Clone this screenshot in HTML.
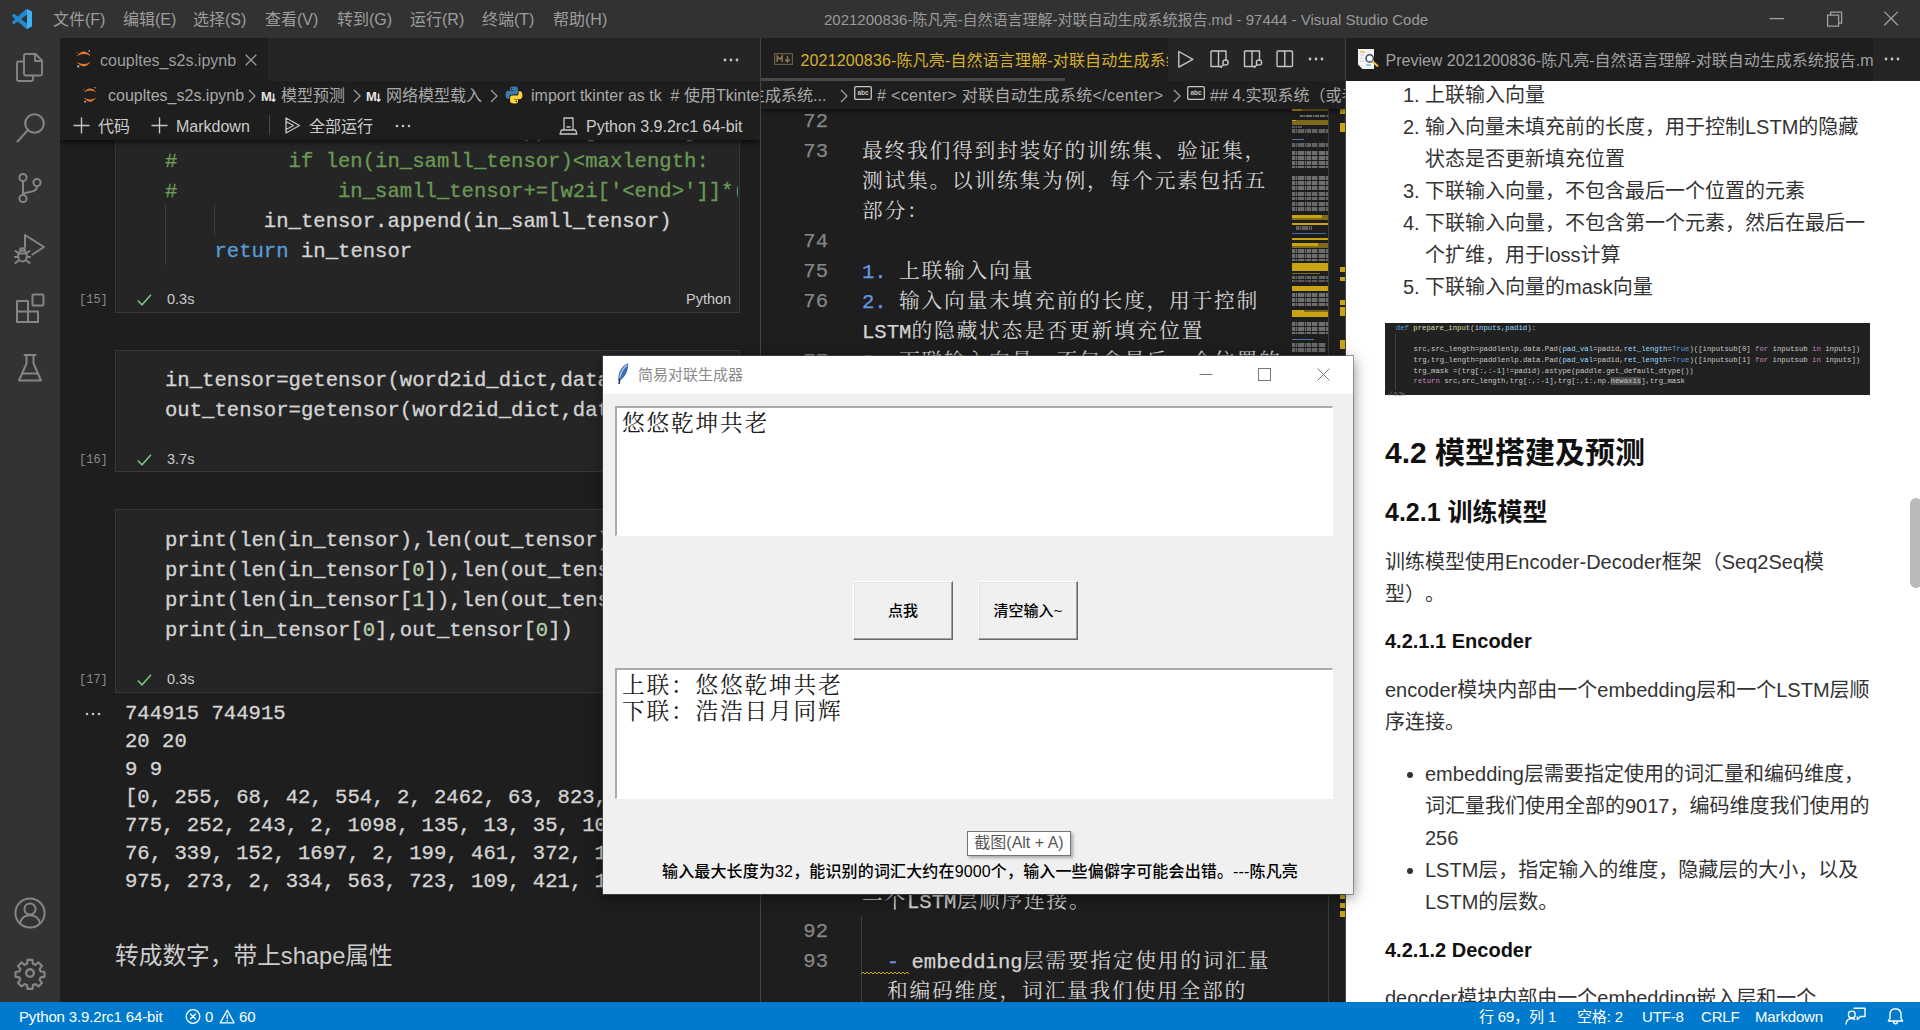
<!DOCTYPE html>
<html lang="zh-CN">
<head>
<meta charset="utf-8">
<title>2021200836-陈凡亮-自然语言理解-对联自动生成系统报告.md - 97444 - Visual Studio Code</title>
<style>
*{box-sizing:border-box;margin:0;padding:0}
html,body{width:1920px;height:1030px;overflow:hidden;background:#1e1e1e}
body{position:relative;text-spacing-trim:space-all;font-family:"Liberation Sans","Noto Sans CJK SC",sans-serif;color:#ccc;font-size:16px}
.abs{position:absolute}
.ui{font-family:"Liberation Sans","Noto Sans CJK SC",sans-serif}
.mono{font-family:"Liberation Mono","Noto Sans CJK SC",monospace}
.kai{font-family:"Liberation Mono","Noto Serif CJK SC",monospace}
.nw{white-space:nowrap}
svg{display:block;overflow:visible}

/* ---------- title bar ---------- */
#titlebar{left:0;top:0;width:1920px;height:38px;background:#323233}
#titlebar .menu{position:absolute;top:0;height:38px;line-height:40px;font-size:16px;color:#9d9d9d;white-space:nowrap}
#titlebar .title{position:absolute;top:0;left:824px;width:602px;text-align:center;height:38px;line-height:39px;font-size:15px;color:#9a9a9a;white-space:nowrap}

/* ---------- activity bar ---------- */
#activity{left:0;top:38px;width:60px;height:964px;background:#333333}
#activity svg{position:absolute;left:14px}

/* ---------- status bar ---------- */
#status{left:0;top:1002px;width:1920px;height:28px;background:#007acc;color:#fff;font-size:15px;letter-spacing:-.15px;line-height:29px;white-space:nowrap}
#status span{position:absolute;top:0}

/* ---------- editor groups ---------- */
.tabbar{background:#252526;height:44px}
.tab{background:#1e1e1e;height:44px;line-height:43px;font-size:16px;white-space:nowrap;overflow:hidden}
.crumbs{background:#1e1e1e;height:27px;line-height:27px;font-size:16px;color:#a9a9a9;white-space:nowrap;overflow:hidden}

/* left notebook */
#g1{left:60px;top:38px;width:700px;height:964px;background:#1e1e1e;overflow:hidden}
.cell{position:absolute;left:55px;width:625px;background:#252526;border:1px solid #383838}
.code{position:absolute;white-space:pre;margin-top:2px;max-width:573px;overflow:hidden;-webkit-text-stroke:.3px;font-size:20.6px;line-height:30px;color:#d4d4d4}
.out{position:absolute;white-space:pre;margin-top:2px;-webkit-text-stroke:.3px;font-size:20.6px;line-height:28px;color:#d4d4d4}
.exec{position:absolute;margin-top:3px;font-size:12px;color:#8b8b8b;left:19px}
.stat{position:absolute;margin-top:2px;font-size:14.5px;color:#ccc}
.cm{color:#6a9955}.kw{color:#569cd6}.nu{color:#b5cea8}

/* middle editor */
#g2{left:761px;top:38px;width:584px;height:964px;background:#1e1e1e;overflow:hidden}
.ln{position:absolute;margin-top:2px;-webkit-text-stroke:.25px;left:0;width:67px;text-align:right;font-size:20.600px;line-height:30px;color:#858585}
.md{position:absolute;margin-top:2.500px;left:101px;letter-spacing:1.700px;font-size:20.800px;line-height:30px;color:#d4d4d4;white-space:nowrap}
.md .la{font-size:20.600px;letter-spacing:0;-webkit-text-stroke:.25px}
.bl{color:#6796e6}

/* right preview */
#g3{left:1346px;top:38px;width:574px;height:964px;background:#fff;overflow:hidden}
#pv{position:absolute;left:0;width:574px;background:#fff;color:#333;font-size:20px;line-height:32px;overflow:hidden}
#pv .p{position:absolute;left:39px;white-space:nowrap}
#pv .li{position:absolute;left:79px;white-space:nowrap}
#pv .num{position:absolute;left:57px;white-space:nowrap}
#pv .h{position:absolute;left:39px;white-space:nowrap;font-weight:bold;color:#111}

/* tk window */
#tk{left:603px;top:356px;width:750px;height:538px;background:#f0f0f0;outline:1px solid rgba(90,90,90,.55);box-shadow:0 3px 14px rgba(0,0,0,.5)}
#tk .tbar{position:absolute;left:0;top:0;width:750px;height:38px;background:#fff}
#tk .ttl{position:absolute;left:35px;top:0;line-height:38px;font-size:15px;color:#8a8a8a;white-space:nowrap}
.tbox{position:absolute;background:#fff;border-top:2px solid #ababab;border-left:2px solid #ababab;border-right:1px solid #fff;border-bottom:1px solid #fff;font-family:"Noto Serif CJK SC","Liberation Serif",serif;color:#1a1a1a;font-size:22.700px;letter-spacing:1.800px;line-height:25.800px;white-space:pre}
.btn{position:absolute;background:#f0f0f0;border:1px solid;border-color:#fff #696969 #696969 #fff;box-shadow:inset -1px -1px 0 #a0a0a0, inset 1px 1px 0 #e3e3e3;text-align:center;color:#000;font-size:15px;font-weight:500}
</style>
</head>
<body>

<!-- TITLE BAR -->
<div id="titlebar" class="abs">
<svg class="abs" style="left:12px;top:9px" width="20" height="20" viewBox="0 0 24 24"><path fill="#2489ca" d="M23.15 2.587L18.21.21a1.494 1.494 0 0 0-1.705.29l-9.46 8.63-4.12-3.128a.999.999 0 0 0-1.276.057L.327 7.261A1 1 0 0 0 .326 8.74L3.899 12 .326 15.26a1 1 0 0 0 .001 1.479L1.65 17.94a.999.999 0 0 0 1.276.057l4.12-3.128 9.46 8.63a1.492 1.492 0 0 0 1.704.29l4.942-2.377A1.5 1.5 0 0 0 24 20.06V3.939a1.5 1.5 0 0 0-.85-1.352zm-5.146 14.861L10.826 12l7.178-5.448v10.896z"/><path fill="#3db1f5" d="M18 .1l5.15 2.49A1.5 1.5 0 0 1 24 3.94v16.12a1.5 1.5 0 0 1-.85 1.35L18 23.9z"/></svg>
<span class="menu" style="left:53px">文件(F)</span>
<span class="menu" style="left:123px">编辑(E)</span>
<span class="menu" style="left:193px">选择(S)</span>
<span class="menu" style="left:265px">查看(V)</span>
<span class="menu" style="left:337px">转到(G)</span>
<span class="menu" style="left:410px">运行(R)</span>
<span class="menu" style="left:482px">终端(T)</span>
<span class="menu" style="left:553px">帮助(H)</span>
<span class="title">2021200836-陈凡亮-自然语言理解-对联自动生成系统报告.md - 97444 - Visual Studio Code</span>
<svg class="abs" style="left:1762px;top:4px" width="150" height="30" viewBox="0 0 150 30" fill="none" stroke="#a0a0a0" stroke-width="1.3"><path d="M7.5 14.6h14.5"/><path d="M65.6 11.2h11v11h-11z M68.6 11.2v-3h11v11h-3"/><path d="M122.3 7.6l13.6 13.6M135.9 7.6l-13.6 13.6"/></svg>
</div>

<!-- ACTIVITY BAR -->
<div id="activity" class="abs">
<svg style="top:13px;left:14px" width="32" height="32" viewBox="0 0 32 32" fill="none" stroke="#858585" stroke-width="1.9" stroke-linejoin="round" stroke-linecap="round"><path d="M10 10.5H4.5a1.5 1.5 0 0 0-1.500 1.500v16.500a1.500 1.500 0 0 0 1.500 1.500H17.500a1.500 1.500 0 0 0 1.500-1.500V25"/><path d="M11.500 3h10l6.500 6.500V23a1.500 1.500 0 0 1-1.500 1.500h-15A1.500 1.500 0 0 1 10 23V4.500A1.500 1.500 0 0 1 11.500 3z"/><path d="M21 3.500v6.500h6.500"/></svg>
<svg style="top:74px;left:15px" width="32" height="32" viewBox="0 0 32 32" fill="none" stroke="#858585" stroke-width="2.1" stroke-linecap="round"><circle cx="19.5" cy="11.500" r="9.300"/><path d="M12.600 18.400L2.500 29.500"/></svg>
<svg style="top:134px;left:15px" width="32" height="32" viewBox="0 0 32 32" fill="none" stroke="#858585" stroke-width="2"><circle cx="8" cy="5.500" r="3.600"/><circle cx="8" cy="26.500" r="3.600"/><circle cx="22" cy="10.500" r="3.600"/><path d="M8 9.100v13.800M22 14.100c0 6-6 5.500-10.500 6.500-2.500.600-3.500 1.500-3.500 3"/></svg>
<svg style="top:194px;left:14px" width="32" height="32" viewBox="0 0 32 32" fill="none" stroke="#858585" stroke-width="2" stroke-linejoin="round" stroke-linecap="round"><path d="M11 15V3l19 12-11.500 7.500"/><ellipse cx="8.500" cy="24" rx="4.300" ry="5.500"/><path d="M4.500 21.500h8M1.500 19l2.700 2M15.500 19l-2.700 2M1 25h3.200M16 25h-3.200M1.500 31l3-2.500M15.500 31l-3-2.500M6 18.500c0-3 5-3 5 0"/></svg>
<svg style="top:254px;left:14px" width="32" height="32" viewBox="0 0 32 32" fill="none" stroke="#858585" stroke-width="2" stroke-linejoin="round"><path d="M3 9h11v21H3zM3 19.500h21V30H14"/><path d="M14 19.500v10.500M24 19.500V30H14"/><rect x="18.500" y="2.500" width="11" height="11" rx="1"/></svg>
<svg style="top:314px;left:15px" width="32" height="32" viewBox="0 0 32 32" fill="none" stroke="#858585" stroke-width="2" stroke-linejoin="round" stroke-linecap="round"><path d="M9.500 3h11M11.500 3v8.500L4 28.500h22l-7.500-17V3"/><path d="M7.500 21.500h15"/></svg>
<svg style="top:859px;left:14px" width="32" height="32" viewBox="0 0 32 32" fill="none" stroke="#858585" stroke-width="2"><circle cx="16" cy="16" r="14.600"/><circle cx="16" cy="12" r="5.600"/><path d="M5.800 26.300c1.500-5.500 5.500-8 10.200-8s8.700 2.500 10.200 8"/></svg>
<svg style="top:919px;left:14px" width="32" height="32" viewBox="0 0 32 32" fill="none" stroke="#858585" stroke-width="2.4" stroke-linejoin="round"><circle cx="16" cy="16" r="3.800"/><path d="M13.300 1.500h5.400l.6 4.300 2.700 1.100 3.500-2.600 3.800 3.800-2.600 3.500 1.100 2.700 4.300.6v5.400l-4.300.6-1.100 2.700 2.600 3.500-3.800 3.800-3.500-2.600-2.700 1.100-.6 4.300h-5.400l-.6-4.300-2.700-1.100-3.500 2.600-3.800-3.800 2.600-3.500-1.100-2.700-4.300-.6v-5.400l4.300-.6 1.100-2.700-2.600-3.500 3.800-3.800 3.500 2.600 2.700-1.100z" transform="translate(1.600 1.600) scale(.9)"/></svg>
</div>

<!-- GROUP 1: notebook -->
<div id="g1" class="abs">
<!-- notebook body -->
<div class="abs" style="left:0;top:102px;width:700px;height:862px;background:#1e1e1e"></div>
<!-- cell 15 -->
<div class="cell" style="top:60px;height:215px"></div>
<div class="abs" style="left:105px;top:167px;width:1px;height:60px;background:#404040"></div>
<div class="abs" style="left:154px;top:167px;width:1px;height:30px;background:#404040"></div>
<div class="code mono" style="left:105px;top:77px"><span class="cm">#       aaaaaa_aaaaa_aaaaaaaappaaa]aaaaaaa]aaa</span>
<span class="cm">#         if len(in_samll_tensor)&lt;maxlength:</span>
<span class="cm">#             in_samll_tensor+=[w2i['&lt;end&gt;']]*(maxlength-len(in_samll_tensor))</span>
        in_tensor.append(in_samll_tensor)
    <span class="kw">return</span> in_tensor</div>
<span class="exec mono" style="top:252px">[15]</span>
<svg class="abs" style="left:77px;top:254px;margin-top:2px" width="15" height="12" viewBox="0 0 15 12" fill="none" stroke="#7fc77d" stroke-width="1.500"><path d="M.8 6.500l4.200 4.300L14 .8"/></svg>
<span class="stat" style="left:107px;top:251px">0.3s</span>
<span class="stat" style="left:626px;top:251px">Python</span>
<!-- cell 16 -->
<div class="cell" style="top:312px;height:122px"></div>
<div class="code mono" style="left:105px;top:326px">in_tensor=getensor(word2id_dict,data_in_path)
out_tensor=getensor(word2id_dict,data_out_path)</div>
<span class="exec mono" style="top:412px">[16]</span>
<svg class="abs" style="left:77px;top:414px;margin-top:2px" width="15" height="12" viewBox="0 0 15 12" fill="none" stroke="#7fc77d" stroke-width="1.500"><path d="M.8 6.500l4.200 4.300L14 .8"/></svg>
<span class="stat" style="left:107px;top:411px">3.7s</span>
<!-- cell 17 -->
<div class="cell" style="top:471px;height:184px"></div>
<div class="code mono" style="left:105px;top:486px">print(len(in_tensor),len(out_tensor))
print(len(in_tensor[<span class="nu">0</span>]),len(out_tensor[<span class="nu">0</span>]))
print(len(in_tensor[<span class="nu">1</span>]),len(out_tensor[<span class="nu">1</span>]))
print(in_tensor[<span class="nu">0</span>],out_tensor[<span class="nu">0</span>])</div>
<span class="exec mono" style="top:632px">[17]</span>
<svg class="abs" style="left:77px;top:634px;margin-top:2px" width="15" height="12" viewBox="0 0 15 12" fill="none" stroke="#7fc77d" stroke-width="1.500"><path d="M.8 6.500l4.200 4.300L14 .8"/></svg>
<span class="stat" style="left:107px;top:631px">0.3s</span>
<!-- output -->
<svg class="abs" style="left:25px;top:674px" width="16" height="4" viewBox="0 0 16 4" fill="#c5c5c5"><circle cx="2" cy="2" r="1.300"/><circle cx="8" cy="2" r="1.300"/><circle cx="14" cy="2" r="1.300"/></svg>
<div class="out mono" style="left:65px;top:660px">744915 744915
20 20
9 9
[0, 255, 68, 42, 554, 2, 2462, 63, 823, 2, 12, 445, 8, 2, 1]
775, 252, 243, 2, 1098, 135, 13, 35, 107, 2, 85, 39, 120,
76, 339, 152, 1697, 2, 199, 461, 372, 1160, 2, 18, 7, 640,
975, 273, 2, 334, 563, 723, 109, 421, 11, 2, 77, 480, 364,</div>
<!-- markdown cell -->
<span class="abs nw" style="left:55px;top:900px;font-size:23.700px;line-height:36px;color:#cccccc">转成数字，带上shape属性</span>
<!-- tab bar -->
<div class="abs tabbar" style="left:0;top:0;width:700px;height:43px"></div>
<div class="abs tab" style="left:0;top:0;width:208px;height:43px"></div>
<svg class="abs" style="left:16px;top:12px" width="16" height="18" viewBox="0 0 16 18" fill="none"><path d="M.8 6.200Q7.800-3 14.800 6.200Q7.800 1.800.8 6.200z" fill="#e8792f"/><path d="M.8 11.800Q7.800 21 14.800 11.800Q7.800 16.200.8 11.800z" fill="#e8792f"/><circle cx="13.200" cy=".9" r=".9" fill="#9e9e9e"/><circle cx="1.100" cy="2.700" r=".6" fill="#8a8a8a"/><circle cx="2.300" cy="16.500" r="1.150" fill="#b0b0b0"/></svg>
<span class="abs nw" style="left:40px;top:0;line-height:46px;font-size:16px;color:#9d9d9d">coupltes_s2s.ipynb</span>
<svg class="abs" style="left:185px;top:16px" width="12" height="12" viewBox="0 0 12 12" fill="none" stroke="#9d9d9d" stroke-width="1.300"><path d="M.7.7l10.600 10.600M11.300.7L.7 11.300"/></svg>
<svg class="abs" style="left:663px;top:20px" width="16" height="4" viewBox="0 0 16 4" fill="#c5c5c5"><circle cx="2" cy="2" r="1.400"/><circle cx="8" cy="2" r="1.400"/><circle cx="14" cy="2" r="1.400"/></svg>
<!-- breadcrumbs -->
<div class="abs crumbs" style="left:0;top:43px;width:700px"></div>
<svg class="abs" style="left:23px;top:48.500px" width="14.400" height="16.200" viewBox="0 0 16 18" fill="none"><path d="M.8 6.200Q7.800-3 14.800 6.200Q7.800 1.800.8 6.200z" fill="#e8792f"/><path d="M.8 11.800Q7.800 21 14.800 11.800Q7.800 16.200.8 11.800z" fill="#e8792f"/><circle cx="13.200" cy=".9" r=".9" fill="#9e9e9e"/><circle cx="1.100" cy="2.700" r=".6" fill="#8a8a8a"/><circle cx="2.300" cy="16.500" r="1.150" fill="#b0b0b0"/></svg>
<span class="abs nw" style="left:48px;top:43px;line-height:30.500px;font-size:16px;color:#a9a9a9">coupltes_s2s.ipynb</span>
<svg class="abs" style="left:188px;top:51px" width="8" height="14" viewBox="0 0 8 14" fill="none" stroke="#a0a0a0" stroke-width="1.300"><path d="M1 1l6 6-6 6"/></svg>
<span class="abs nw" style="left:201px;top:43px;line-height:31px;font-size:13px;font-weight:bold;color:#e4e4e4;letter-spacing:-.6px">M<span style="font-size:13px;-webkit-text-stroke:.7px #e4e4e4;margin-left:-1px">&#8595;</span></span>
<span class="abs nw" style="left:221px;top:43px;line-height:30.500px;font-size:16px;color:#a9a9a9">模型预测</span>
<svg class="abs" style="left:293px;top:51px" width="8" height="14" viewBox="0 0 8 14" fill="none" stroke="#a0a0a0" stroke-width="1.300"><path d="M1 1l6 6-6 6"/></svg>
<span class="abs nw" style="left:306px;top:43px;line-height:31px;font-size:13px;font-weight:bold;color:#e4e4e4;letter-spacing:-.6px">M<span style="font-size:13px;-webkit-text-stroke:.7px #e4e4e4;margin-left:-1px">&#8595;</span></span>
<span class="abs nw" style="left:326px;top:43px;line-height:30.500px;font-size:16px;color:#a9a9a9">网络模型载入</span>
<svg class="abs" style="left:430px;top:51px" width="8" height="14" viewBox="0 0 8 14" fill="none" stroke="#a0a0a0" stroke-width="1.300"><path d="M1 1l6 6-6 6"/></svg>
<svg class="abs" style="left:445px;top:48px" width="18" height="18" viewBox="0 0 18 18"><path d="M8.900.5C4.700.5 5 2.300 5 2.300v1.900h4v.6H3.300S.6 4.500.6 8.700s2.400 4.100 2.400 4.100h1.400v-2s-.1-2.400 2.300-2.400h4s2.200 0 2.200-2.200V2.700S13.300.5 8.900.5z" fill="#3b7bb0"/><circle cx="6.700" cy="2.500" r=".75" fill="#1e1e1e"/><path d="M9.100 17.500c4.200 0 3.900-1.800 3.900-1.800v-1.900H9v-.6h5.700s2.700.3 2.700-3.900-2.400-4.100-2.400-4.100h-1.400v2s.1 2.400-2.300 2.400h-4s-2.200 0-2.200 2.200v3.500s-.4 2.200 4 2.200z" fill="#ffd43b"/><circle cx="11.300" cy="15.500" r=".75" fill="#1e1e1e"/></svg>
<span class="abs nw" style="left:471px;top:43px;line-height:30.500px;font-size:16px;color:#a9a9a9">import tkinter as tk&nbsp; # 使用Tkinter库</span>
<!-- toolbar (over cells) -->
<div class="abs" style="left:0;top:70px;width:700px;height:32px;background:#1e1e1e;box-shadow:0 3px 5px rgba(0,0,0,.55)"></div>
<svg class="abs" style="left:13px;top:79px" width="17" height="17" viewBox="0 0 17 17" fill="none" stroke="#c5c5c5" stroke-width="1.400"><path d="M8.500.5v16M.5 8.500h16"/></svg>
<span class="abs nw" style="left:38px;top:71px;line-height:35px;font-size:16px;color:#cccccc">代码</span>
<svg class="abs" style="left:91px;top:79px" width="17" height="17" viewBox="0 0 17 17" fill="none" stroke="#c5c5c5" stroke-width="1.400"><path d="M8.500.5v16M.5 8.500h16"/></svg>
<span class="abs nw" style="left:116px;top:71px;line-height:35px;font-size:16px;color:#cccccc">Markdown</span>
<div class="abs" style="left:209px;top:77px;width:1px;height:20px;background:#4a4a4a"></div>
<svg class="abs" style="left:225px;top:79px" width="17" height="17" viewBox="0 0 17 17" fill="none" stroke="#c5c5c5" stroke-width="1.300" stroke-linejoin="round"><path d="M1 1l13.500 7.500L1 16zM1 4.500l7.500 4L1 12.500"/></svg>
<span class="abs nw" style="left:249px;top:71px;line-height:35px;font-size:16px;color:#cccccc">全部运行</span>
<svg class="abs" style="left:335px;top:86px" width="16" height="4" viewBox="0 0 16 4" fill="#c5c5c5"><circle cx="2" cy="2" r="1.300"/><circle cx="8" cy="2" r="1.300"/><circle cx="14" cy="2" r="1.300"/></svg>
<svg class="abs" style="left:499px;top:79px" width="19" height="18" viewBox="0 0 19 18" fill="none" stroke="#c5c5c5" stroke-width="1.300" stroke-linejoin="round"><path d="M5 1h9v12H5zM2.500 13h14l1.500 4H1zM7.500 10h4"/></svg>
<span class="abs nw" style="left:526px;top:71px;line-height:35px;font-size:16px;color:#cccccc">Python 3.9.2rc1 64-bit</span>
</div>

<!-- GROUP 2: markdown source -->
<div id="g2" class="abs">
<!-- editor text -->
<span class="ln mono" style="top:67px">72</span>
<span class="ln mono" style="top:97px">73</span>
<span class="md kai" style="top:97px;left:101px">最终我们得到封装好的训练集、验证集，</span>
<span class="md kai" style="top:127px;left:101px">测试集。以训练集为例，每个元素包括五</span>
<span class="md kai" style="top:157px;left:101px">部分：</span>
<span class="ln mono" style="top:187px">74</span>
<span class="ln mono" style="top:217px">75</span>
<span class="md kai" style="top:217px;left:101px"><span class="bl la">1. </span>上联输入向量</span>
<span class="ln mono" style="top:247px">76</span>
<span class="md kai" style="top:247px;left:101px"><span class="bl la">2. </span>输入向量未填充前的长度，用于控制</span>
<span class="md kai" style="top:277px;left:101px"><span class="la">LSTM</span>的隐藏状态是否更新填充位置</span>
<span class="ln mono" style="top:307px">77</span>
<span class="md kai" style="top:307px;left:101px"><span class="bl la">3. </span>下联输入向量，不包含最后一个位置的</span>
<span class="md kai" style="top:847px;left:101px">一个<span class="la">LSTM</span>层顺序连接。</span>
<span class="ln mono" style="top:877px">92</span>
<span class="ln mono" style="top:907px">93</span>
<span class="md kai" style="top:907px;left:101px"><span class="bl la">&nbsp;&nbsp;- </span><span class="la">embedding</span>层需要指定使用的词汇量</span>
<span class="md kai" style="top:937px;left:126px">和编码维度，词汇量我们使用全部的</span>
<div class="abs" style="left:100px;top:878px;width:1px;height:86px;background:#404040"></div>
<svg class="abs" style="left:100px;top:933px" width="50" height="4" viewBox="0 0 50 4" fill="none" stroke="#cca700" stroke-width="1"><path d="M0 3l2-2 2 2 2-2 2 2 2-2 2 2 2-2 2 2 2-2 2 2 2-2 2 2 2-2 2 2 2-2 2 2 2-2 2 2 2-2 2 2 2-2 2 2 2-2 2 2"/></svg>
<!-- minimap -->
<div class="abs" style="left:531.0px;top:70.8px;width:36.0px;height:2.6px;background:#7d6a1c;opacity:1"></div>
<div class="abs" style="left:531.0px;top:70.8px;width:10.0px;height:2.6px;background:#c8a415;opacity:1"></div>
<div class="abs" style="left:539.0px;top:77.0px;width:28.0px;height:2.0px;background:repeating-linear-gradient(90deg,rgba(30,30,30,0) 0 5px,rgba(30,30,30,.75) 5px 5.800px,rgba(30,30,30,0) 5.800px 7px),repeating-linear-gradient(90deg,rgba(30,30,30,0) 0 3px,rgba(30,30,30,.6) 3px 4px,rgba(30,30,30,0) 4px 11px),repeating-linear-gradient(180deg,#bdbdbd 0 1.700px,rgba(0,0,0,0) 1.700px 2.500px);opacity:0.50"></div>
<div class="abs" style="left:531.0px;top:81.7px;width:36.0px;height:5.6px;background:#7d6a1c;opacity:1"></div>
<div class="abs" style="left:531.0px;top:81.7px;width:4.0px;height:1.8px;background:#c8a415;opacity:1"></div>
<div class="abs" style="left:531.0px;top:88.0px;width:10.0px;height:2.0px;background:repeating-linear-gradient(90deg,rgba(30,30,30,0) 0 5px,rgba(30,30,30,.75) 5px 5.800px,rgba(30,30,30,0) 5.800px 7px),repeating-linear-gradient(90deg,rgba(30,30,30,0) 0 3px,rgba(30,30,30,.6) 3px 4px,rgba(30,30,30,0) 4px 11px),repeating-linear-gradient(180deg,#bdbdbd 0 1.700px,rgba(0,0,0,0) 1.700px 2.500px);opacity:0.36"></div>
<div class="abs" style="left:531.0px;top:91.0px;width:36.0px;height:5.0px;background:repeating-linear-gradient(90deg,rgba(30,30,30,0) 0 5px,rgba(30,30,30,.75) 5px 5.800px,rgba(30,30,30,0) 5.800px 7px),repeating-linear-gradient(90deg,rgba(30,30,30,0) 0 3px,rgba(30,30,30,.6) 3px 4px,rgba(30,30,30,0) 4px 11px),repeating-linear-gradient(180deg,#bdbdbd 0 1.700px,rgba(0,0,0,0) 1.700px 2.500px);opacity:0.43"></div>
<div class="abs" style="left:531.0px;top:100.5px;width:12.0px;height:1.5px;background:#4f7fb8;opacity:0.9"></div>
<div class="abs" style="left:531.0px;top:105.0px;width:36.0px;height:5.0px;background:repeating-linear-gradient(90deg,rgba(30,30,30,0) 0 5px,rgba(30,30,30,.75) 5px 5.800px,rgba(30,30,30,0) 5.800px 7px),repeating-linear-gradient(90deg,rgba(30,30,30,0) 0 3px,rgba(30,30,30,.6) 3px 4px,rgba(30,30,30,0) 4px 11px),repeating-linear-gradient(180deg,#bdbdbd 0 1.700px,rgba(0,0,0,0) 1.700px 2.500px);opacity:0.43"></div>
<div class="abs" style="left:531.0px;top:112.5px;width:36.0px;height:17.5px;background:repeating-linear-gradient(90deg,rgba(30,30,30,0) 0 5px,rgba(30,30,30,.75) 5px 5.800px,rgba(30,30,30,0) 5.800px 7px),repeating-linear-gradient(90deg,rgba(30,30,30,0) 0 3px,rgba(30,30,30,.6) 3px 4px,rgba(30,30,30,0) 4px 11px),repeating-linear-gradient(180deg,#bdbdbd 0 1.700px,rgba(0,0,0,0) 1.700px 2.500px);opacity:0.50"></div>
<div class="abs" style="left:531.0px;top:137.8px;width:36.0px;height:13.8px;background:repeating-linear-gradient(90deg,rgba(30,30,30,0) 0 5px,rgba(30,30,30,.75) 5px 5.800px,rgba(30,30,30,0) 5.800px 7px),repeating-linear-gradient(90deg,rgba(30,30,30,0) 0 3px,rgba(30,30,30,.6) 3px 4px,rgba(30,30,30,0) 4px 11px),repeating-linear-gradient(180deg,#bdbdbd 0 1.700px,rgba(0,0,0,0) 1.700px 2.500px);opacity:0.50"></div>
<div class="abs" style="left:531.0px;top:154.0px;width:36.0px;height:8.0px;background:repeating-linear-gradient(90deg,rgba(30,30,30,0) 0 5px,rgba(30,30,30,.75) 5px 5.800px,rgba(30,30,30,0) 5.800px 7px),repeating-linear-gradient(90deg,rgba(30,30,30,0) 0 3px,rgba(30,30,30,.6) 3px 4px,rgba(30,30,30,0) 4px 11px),repeating-linear-gradient(180deg,#bdbdbd 0 1.700px,rgba(0,0,0,0) 1.700px 2.500px);opacity:0.47"></div>
<div class="abs" style="left:531.0px;top:164.0px;width:36.0px;height:10.0px;background:repeating-linear-gradient(90deg,rgba(30,30,30,0) 0 5px,rgba(30,30,30,.75) 5px 5.800px,rgba(30,30,30,0) 5.800px 7px),repeating-linear-gradient(90deg,rgba(30,30,30,0) 0 3px,rgba(30,30,30,.6) 3px 4px,rgba(30,30,30,0) 4px 11px),repeating-linear-gradient(180deg,#bdbdbd 0 1.700px,rgba(0,0,0,0) 1.700px 2.500px);opacity:0.47"></div>
<div class="abs" style="left:531.0px;top:177.0px;width:36.0px;height:5.0px;background:#7d6a1c;opacity:1"></div>
<div class="abs" style="left:531.0px;top:177.0px;width:30.0px;height:3.0px;background:#c8a415;opacity:1"></div>
<div class="abs" style="left:531.0px;top:184.5px;width:36.0px;height:2.0px;background:#c8a415;opacity:1"></div>
<div class="abs" style="left:535.0px;top:188.0px;width:16.0px;height:5.0px;background:repeating-linear-gradient(90deg,rgba(30,30,30,0) 0 5px,rgba(30,30,30,.75) 5px 5.800px,rgba(30,30,30,0) 5.800px 7px),repeating-linear-gradient(90deg,rgba(30,30,30,0) 0 3px,rgba(30,30,30,.6) 3px 4px,rgba(30,30,30,0) 4px 11px),repeating-linear-gradient(180deg,#bdbdbd 0 1.700px,rgba(0,0,0,0) 1.700px 2.500px);opacity:0.43"></div>
<div class="abs" style="left:531.0px;top:194.5px;width:34.0px;height:1.5px;background:#4f7fb8;opacity:0.8"></div>
<div class="abs" style="left:531.0px;top:200.4px;width:36.0px;height:2.0px;background:#c8a415;opacity:1"></div>
<div class="abs" style="left:531.0px;top:204.7px;width:36.0px;height:5.0px;background:#7d6a1c;opacity:1"></div>
<div class="abs" style="left:531.0px;top:204.7px;width:26.0px;height:3.3px;background:#c8a415;opacity:1"></div>
<div class="abs" style="left:531.0px;top:211.0px;width:36.0px;height:12.0px;background:repeating-linear-gradient(90deg,rgba(30,30,30,0) 0 5px,rgba(30,30,30,.75) 5px 5.800px,rgba(30,30,30,0) 5.800px 7px),repeating-linear-gradient(90deg,rgba(30,30,30,0) 0 3px,rgba(30,30,30,.6) 3px 4px,rgba(30,30,30,0) 4px 11px),repeating-linear-gradient(180deg,#bdbdbd 0 1.700px,rgba(0,0,0,0) 1.700px 2.500px);opacity:0.50"></div>
<div class="abs" style="left:531.0px;top:225.0px;width:36.0px;height:7.5px;background:#c8a415;opacity:1"></div>
<div class="abs" style="left:531.0px;top:234.5px;width:28.0px;height:1.5px;background:#7d6a1c;opacity:1"></div>
<div class="abs" style="left:531.0px;top:238.0px;width:36.0px;height:2.5px;background:repeating-linear-gradient(90deg,rgba(30,30,30,0) 0 5px,rgba(30,30,30,.75) 5px 5.800px,rgba(30,30,30,0) 5.800px 7px),repeating-linear-gradient(90deg,rgba(30,30,30,0) 0 3px,rgba(30,30,30,.6) 3px 4px,rgba(30,30,30,0) 4px 11px),repeating-linear-gradient(180deg,#bdbdbd 0 1.700px,rgba(0,0,0,0) 1.700px 2.500px);opacity:0.43"></div>
<div class="abs" style="left:531.0px;top:241.5px;width:36.0px;height:2.5px;background:repeating-linear-gradient(90deg,rgba(30,30,30,0) 0 5px,rgba(30,30,30,.75) 5px 5.800px,rgba(30,30,30,0) 5.800px 7px),repeating-linear-gradient(90deg,rgba(30,30,30,0) 0 3px,rgba(30,30,30,.6) 3px 4px,rgba(30,30,30,0) 4px 11px),repeating-linear-gradient(180deg,#bdbdbd 0 1.700px,rgba(0,0,0,0) 1.700px 2.500px);opacity:0.36"></div>
<div class="abs" style="left:531.0px;top:247.6px;width:36.0px;height:5.1px;background:#c8a415;opacity:1"></div>
<div class="abs" style="left:531.0px;top:255.0px;width:36.0px;height:13.0px;background:repeating-linear-gradient(90deg,rgba(30,30,30,0) 0 5px,rgba(30,30,30,.75) 5px 5.800px,rgba(30,30,30,0) 5.800px 7px),repeating-linear-gradient(90deg,rgba(30,30,30,0) 0 3px,rgba(30,30,30,.6) 3px 4px,rgba(30,30,30,0) 4px 11px),repeating-linear-gradient(180deg,#bdbdbd 0 1.700px,rgba(0,0,0,0) 1.700px 2.500px);opacity:0.50"></div>
<div class="abs" style="left:531.0px;top:271.6px;width:36.0px;height:7.4px;background:#c8a415;opacity:1"></div>
<div class="abs" style="left:543.0px;top:271.6px;width:24.0px;height:2.4px;background:#7d6a1c;opacity:1"></div>
<div class="abs" style="left:531.0px;top:284.0px;width:36.0px;height:12.0px;background:repeating-linear-gradient(90deg,rgba(30,30,30,0) 0 5px,rgba(30,30,30,.75) 5px 5.800px,rgba(30,30,30,0) 5.800px 7px),repeating-linear-gradient(90deg,rgba(30,30,30,0) 0 3px,rgba(30,30,30,.6) 3px 4px,rgba(30,30,30,0) 4px 11px),repeating-linear-gradient(180deg,#bdbdbd 0 1.700px,rgba(0,0,0,0) 1.700px 2.500px);opacity:0.50"></div>
<div class="abs" style="left:531.0px;top:300.5px;width:22.0px;height:1.5px;background:#4f7fb8;opacity:0.9"></div>
<div class="abs" style="left:531.0px;top:305.0px;width:34.0px;height:10.0px;background:repeating-linear-gradient(90deg,rgba(30,30,30,0) 0 5px,rgba(30,30,30,.75) 5px 5.800px,rgba(30,30,30,0) 5.800px 7px),repeating-linear-gradient(90deg,rgba(30,30,30,0) 0 3px,rgba(30,30,30,.6) 3px 4px,rgba(30,30,30,0) 4px 11px),repeating-linear-gradient(180deg,#bdbdbd 0 1.700px,rgba(0,0,0,0) 1.700px 2.500px);opacity:0.47"></div>
<div class="abs" style="left:579px;top:70.8px;width:6px;height:5.1px;background:#c8a415"></div>
<div class="abs" style="left:579px;top:84.7px;width:6px;height:8.9px;background:#c8a415"></div>
<div class="abs" style="left:579px;top:228.7px;width:6px;height:5.0px;background:#c8a415"></div>
<div class="abs" style="left:579px;top:238.8px;width:6px;height:4.5px;background:#c8a415"></div>
<div class="abs" style="left:579px;top:261.5px;width:6px;height:5.0px;background:#c8a415"></div>
<div class="abs" style="left:579px;top:269.0px;width:6px;height:9.0px;background:#c8a415"></div>
<div class="abs" style="left:579px;top:302.0px;width:6px;height:8.7px;background:#c8a415"></div>
<div class="abs" style="left:579px;top:857.0px;width:6px;height:4.0px;background:#c8a415"></div>
<div class="abs" style="left:579px;top:864.5px;width:6px;height:5.0px;background:#c8a415"></div>
<div class="abs" style="left:579px;top:873.0px;width:6px;height:5.5px;background:#c8a415"></div>
<div class="abs" style="left:567px;top:71px;width:1px;height:893px;background:#3a3a3a"></div>
<!-- tab bar -->
<div class="abs" style="left:0;top:0;width:584px;height:43px;background:#1e1e1e"></div>
<div class="abs" style="left:407px;top:0;width:177px;height:43px;background:#252526"></div>
<svg class="abs" style="left:13px;top:15px" width="19" height="12" viewBox="0 0 19 12" fill="none"><rect x=".6" y=".6" width="17.800" height="10.800" stroke="#6b5c48" stroke-width="1.200"/><path d="M3.200 9V3.200l2.500 3.200 2.500-3.200V9" stroke="#8a7350" stroke-width="1.500"/><path d="M13.500 3v5.500M11.200 6.500l2.300 2.500 2.300-2.500" stroke="#8a7350" stroke-width="1.500"/></svg>
<span class="abs nw" style="left:39.500px;top:0;width:367.500px;overflow:hidden;line-height:46px;font-size:16px;letter-spacing:.15px;color:#d4b032">2021200836-陈凡亮-自然语言理解-对联自动生成系统报告.md</span>
<div class="abs" style="left:0;top:40px;width:304px;height:3px;background:#4a4a4c"></div>
<svg class="abs" style="left:416px;top:12px" width="150" height="20" viewBox="0 0 150 20" fill="none" stroke="#c5c5c5" stroke-width="1.400" stroke-linejoin="round"><path d="M1.800 1.500l14 7.800-14 7.800z"/><path d="M34 1h15v10M41.500 1v15.500M45 16.500H34V1"/><circle cx="48.500" cy="12.500" r="2.600"/><path d="M46.600 14.500l-3 3.200"/><path d="M67.500 1h15v10M75 1v15.500M78.500 16.500h-11V1"/><circle cx="82" cy="12.500" r="2.600"/><path d="M80.100 14.500l-3 3.200"/><rect x="100" y="1" width="15.500" height="15.500" rx="1"/><path d="M107.750 1v15.500"/></svg>
<svg class="abs" style="left:547px;top:19px" width="16" height="4" viewBox="0 0 16 4" fill="#c5c5c5"><circle cx="2" cy="2" r="1.400"/><circle cx="8" cy="2" r="1.400"/><circle cx="14" cy="2" r="1.400"/></svg>
<!-- breadcrumbs -->
<div class="abs" style="left:0;top:43px;width:584px;height:28px;background:#1e1e1e;box-shadow:0 3px 4px rgba(0,0,0,.45)"></div>
<span class="abs nw" style="left:-12px;top:43px;line-height:30.500px;font-size:16px;color:#a9a9a9">生成系统...</span>
<svg class="abs" style="left:79px;top:51px" width="8" height="14" viewBox="0 0 8 14" fill="none" stroke="#a0a0a0" stroke-width="1.300"><path d="M1 1l6 6-6 6"/></svg><svg class="abs" style="left:93px;top:48px" width="18" height="14" viewBox="0 0 18 14" fill="none"><rect x=".7" y=".7" width="16.600" height="12.600" rx="1.200" stroke="#c5c5c5" stroke-width="1.300"/><text x="9" y="9" text-anchor="middle" font-family="Liberation Sans, sans-serif" font-weight="bold" font-size="6.500" fill="#c5c5c5">abc</text></svg>
<span class="abs nw" style="left:116px;top:43px;line-height:30.500px;font-size:16px;letter-spacing:.35px;color:#a9a9a9"># &lt;center&gt; 对联自动生成系统&lt;/center&gt;</span>
<svg class="abs" style="left:412px;top:51px" width="8" height="14" viewBox="0 0 8 14" fill="none" stroke="#a0a0a0" stroke-width="1.300"><path d="M1 1l6 6-6 6"/></svg><svg class="abs" style="left:426px;top:48px" width="18" height="14" viewBox="0 0 18 14" fill="none"><rect x=".7" y=".7" width="16.600" height="12.600" rx="1.200" stroke="#c5c5c5" stroke-width="1.300"/><text x="9" y="9" text-anchor="middle" font-family="Liberation Sans, sans-serif" font-weight="bold" font-size="6.500" fill="#c5c5c5">abc</text></svg>
<span class="abs nw" style="left:449px;top:43px;line-height:30.500px;font-size:16px;color:#a9a9a9">## 4.实现系统（或者模型）</span>
</div>

<!-- GROUP 3: preview -->
<div id="g3" class="abs"><div id="pv" style="top:43px;height:921px">
<span class="num" style="top:-2px">1.</span>
<span class="li" style="top:-2px">上联输入向量</span>
<span class="num" style="top:30px">2.</span>
<span class="li" style="top:30px">输入向量未填充前的长度，用于控制LSTM的隐藏</span>
<span class="li" style="top:62px">状态是否更新填充位置</span>
<span class="num" style="top:94px">3.</span>
<span class="li" style="top:94px">下联输入向量，不包含最后一个位置的元素</span>
<span class="num" style="top:126px">4.</span>
<span class="li" style="top:126px">下联输入向量，不包含第一个元素，然后在最后一</span>
<span class="li" style="top:158px">个扩维，用于loss计算</span>
<span class="num" style="top:190px">5.</span>
<span class="li" style="top:190px">下联输入向量的mask向量</span>
<svg class="abs" style="left:39px;top:242px" width="485" height="72" viewBox="0 0 485 72"><rect width="485" height="72" fill="#212121"/><rect x="225.500" y="54" width="30.500" height="8" fill="#4b4b4b"/><path d="M10.500 11v56" stroke="#404040" stroke-width="1"/><g font-family="Liberation Mono, monospace" font-size="7.300" fill="#c8c8c8" xml:space="preserve"><text x="10.8" y="7.1"><tspan fill="#569cd6">def</tspan> <tspan fill="#dcdcaa">prepare_input</tspan>(<tspan fill="#9cdcfe">inputs,padid</tspan>):</text><text x="28.5" y="28.3">src,src_length=paddlenlp.data.Pad(<tspan fill="#9cdcfe">pad_val</tspan>=padid,<tspan fill="#9cdcfe">ret_length</tspan>=<tspan fill="#569cd6">True</tspan>)([inputsub[0] <tspan fill="#c586c0">for</tspan> inputsub <tspan fill="#c586c0">in</tspan> inputs])</text><text x="28.5" y="38.9">trg,trg_length=paddlenlp.data.Pad(<tspan fill="#9cdcfe">pad_val</tspan>=padid,<tspan fill="#9cdcfe">ret_length</tspan>=<tspan fill="#569cd6">True</tspan>)([inputsub[1] <tspan fill="#c586c0">for</tspan> inputsub <tspan fill="#c586c0">in</tspan> inputs])</text><text x="28.5" y="49.8">trg_mask =(trg[:,:-1]!=padid).astype(paddle.get_default_dtype())</text><text x="28.5" y="60.3"><tspan fill="#c586c0">return</tspan> src,src_length,trg[:,:-1],trg[:,1:,np.newaxis],trg_mask</text></g><text x="3" y="72.500" font-family="Liberation Sans, sans-serif" font-size="6" fill="#8a8a8a">✓ 0.2s</text></svg>
<span class="h" style="top:352px;font-size:30px;line-height:40px">4.2 模型搭建及预测</span>
<span class="h" style="top:413px;font-size:25px;line-height:36px">4.2.1 训练模型</span>
<span class="p" style="top:465px">训练模型使用Encoder-Decoder框架（Seq2Seq模</span>
<span class="p" style="top:497px">型）。</span>
<span class="h" style="top:544px;font-size:20px;line-height:32px">4.2.1.1 Encoder</span>
<span class="p" style="top:593px">encoder模块内部由一个embedding层和一个LSTM层顺</span>
<span class="p" style="top:625px">序连接。</span>
<span class="abs" style="left:61px;top:691px;width:6px;height:6px;border-radius:3px;background:#333"></span>
<span class="li" style="top:677px">embedding层需要指定使用的词汇量和编码维度，</span>
<span class="li" style="top:709px">词汇量我们使用全部的9017，编码维度我们使用的</span>
<span class="li" style="top:741px">256</span>
<span class="abs" style="left:61px;top:787px;width:6px;height:6px;border-radius:3px;background:#333"></span>
<span class="li" style="top:773px">LSTM层，指定输入的维度，隐藏层的大小，以及</span>
<span class="li" style="top:805px">LSTM的层数。</span>
<span class="h" style="top:853px;font-size:20px;line-height:32px">4.2.1.2 Decoder</span>
<span class="p" style="top:901px">deocder模块内部由一个embedding嵌入层和一个</span>
<div class="abs" style="left:564px;top:417px;width:12px;height:90px;border-radius:6px;background:#b9b9b9"></div>
</div>
<!-- tab bar -->
<div class="abs" style="left:0;top:0;width:574px;height:43px;background:#252526"></div>
<div class="abs" style="left:0;top:0;width:527px;height:43px;background:#1e1e1e"></div>
<svg class="abs" style="left:12px;top:11px" width="22" height="21" viewBox="0 0 22 21" fill="none"><path d="M0 0h16v20H4.500L0 15.500z" fill="#f3f3f3"/><path d="M2 3h5" stroke="#f0a848" stroke-width="1.200"/><path d="M2 6h4M2 9h3M2 12h4" stroke="#c9d3e0" stroke-width="1"/><path d="M8 16h5" stroke="#58b8c0" stroke-width="1.200"/><circle cx="11.700" cy="9.400" r="3.700" fill="#f8fbff" stroke="#3c4a5c" stroke-width="1.500"/><path d="M15 13l4.300 3.800" stroke="#f2c24e" stroke-width="2.200" stroke-linecap="round"/></svg>
<span class="abs nw" style="left:39.500px;top:0;width:487px;overflow:hidden;line-height:46px;font-size:16px;color:#a0a0a0">Preview 2021200836-陈凡亮-自然语言理解-对联自动生成系统报告.md</span>
<svg class="abs" style="left:538px;top:19px" width="16" height="4" viewBox="0 0 16 4" fill="#c5c5c5"><circle cx="2" cy="2" r="1.400"/><circle cx="8" cy="2" r="1.400"/><circle cx="14" cy="2" r="1.400"/></svg>
</div>

<!-- borders between groups -->
<div class="abs" style="left:760px;top:38px;width:1px;height:964px;background:#444"></div>
<div class="abs" style="left:1345px;top:38px;width:1px;height:964px;background:#444"></div>

<!-- STATUS BAR -->
<div id="status" class="abs ui">
<span style="left:19px">Python 3.9.2rc1 64-bit</span>
<svg class="abs" style="left:185px;top:6px" width="60" height="17" viewBox="0 0 60 17" fill="none" stroke="#fff" stroke-width="1.3"><circle cx="8" cy="8.500" r="6.800"/><path d="M5.200 5.700l5.600 5.600M10.800 5.700l-5.600 5.600"/><path d="M42.200 2.200l6.900 12.600H35.300z" stroke-linejoin="round"/><path d="M42.200 6.500v4.500M42.200 12v1.500"/></svg>
<span style="left:205px">0</span>
<span style="left:239px">60</span>
<span style="left:1479px">行 69，列 1</span>
<span style="left:1577px">空格: 2</span>
<span style="left:1642px">UTF-8</span>
<span style="left:1701px">CRLF</span>
<span style="left:1755px">Markdown</span>
<svg class="abs" style="left:1845px;top:5px" width="60" height="19" viewBox="0 0 60 19" fill="none" stroke="#fff" stroke-width="1.4" stroke-linejoin="round"><circle cx="6.800" cy="7.500" r="3.400"/><path d="M.8 17.500c.500-4 3-6 6-6 1.500 0 2.500.400 3.500 1.200"/><path d="M8.500 1.200h11.500v8.300h-4.500l-3.200 3v-3"/><path d="M50.500 1.800c-3.800 0-5.500 2.800-5.500 6v3.500l-1.700 2.700h14.400l-1.700-2.700V7.800c0-3.200-1.700-6-5.500-6zM48.500 14.500c0 1.300.800 2.200 2 2.200s2-.900 2-2.200"/></svg>
</div>

<!-- TK WINDOW -->
<div id="tk" class="abs">
<div class="tbar"></div>
<svg class="abs" style="left:14px;top:7px" width="13" height="22" viewBox="0 0 12 21"><path d="M10.500.3C6 1.500 1.800 6.500 1.200 13.500L.8 16l1 .5L1.500 20l.9.200.9-4C7 14 10.800 8 10.500.3z" fill="#3d6fb0"/><path d="M9.500 2C6.500 4 3.500 8.500 2.500 14" stroke="#a8c8ee" stroke-width="1.300" fill="none"/><path d="M2.200 15l-.5 5" stroke="#1d2c48" stroke-width="1.100"/></svg>
<span class="ttl">简易对联生成器</span>
<svg class="abs" style="left:596px;top:12px" width="132" height="14" viewBox="0 0 132 14" fill="none" stroke="#777" stroke-width="1"><path d="M.5 6.500h13"/><rect x="59.500" y=".5" width="12" height="12"/><path d="M118.500.5l12 12M130.500.5l-12 12"/></svg>
<div class="tbox" style="left:12px;top:50px;width:718px;height:130px;padding:1px 0 0 5px">悠悠乾坤共老</div>
<div class="btn" style="left:250px;top:225px;width:100px;height:59px;line-height:57px">点我</div>
<div class="btn" style="left:375px;top:225px;width:100px;height:59px;line-height:57px">清空输入~</div>
<div class="tbox" style="left:12px;top:312px;width:718px;height:131px;padding:1px 0 0 5px">上联：悠悠乾坤共老
下联：浩浩日月同辉</div>
<div class="abs nw" style="left:364px;top:475px;width:104px;height:25px;background:#fff;border:1px solid #767676;box-shadow:2px 2px 3px rgba(0,0,0,.3);font-size:16px;line-height:22px;text-align:center;color:#575757">截图(Alt + A)</div>
<div class="abs nw" style="left:0;top:503px;width:750px;text-align:center;padding-left:4px;font-size:16px;line-height:25px;color:#000;font-weight:500;letter-spacing:.15px">输入最大长度为32，能识别的词汇大约在9000个，输入一些偏僻字可能会出错。---陈凡亮</div>
</div>

</body>
</html>
